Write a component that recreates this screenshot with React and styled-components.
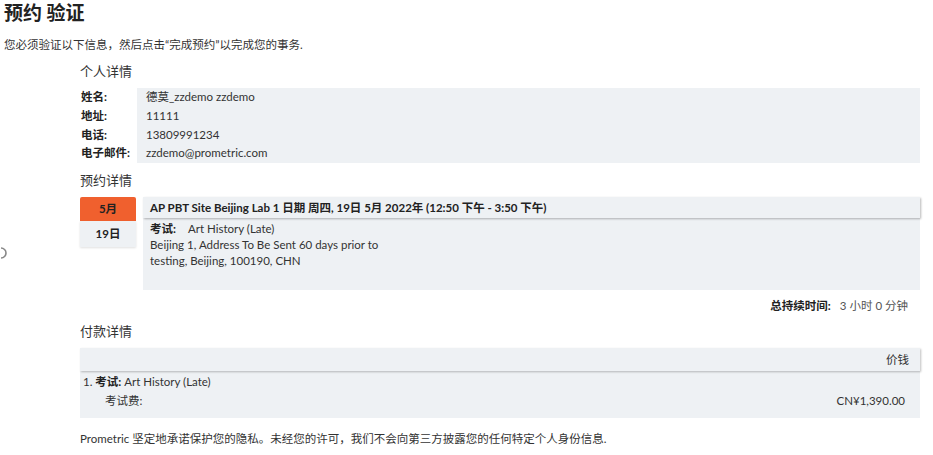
import React from "react";
import styled, { createGlobalStyle } from "styled-components";

const Global = createGlobalStyle`
  html, body { margin: 0; padding: 0; background: #fff; }
  body {
    font-family: Lato, "Noto Sans CJK SC", sans-serif;
    font-size: 11.5px;
    color: #333;
  }
`;

const Page = styled.div`
  position: relative;
  padding: 0 0 0 4px;
  width: 929px;
  height: 455px;
  overflow: hidden;
`;

const Title = styled.h1`
  margin: 0;
  padding-top: 1px;
  font-size: 19px;
  line-height: 24px;
  font-weight: 700;
  color: #222;
`;

const Intro = styled.p`
  margin: 12px 0 0;
  font-size: 11.5px;
  line-height: 16px;
`;

const Content = styled.div`
  margin-left: 76px;
  width: 840px;
`;

const SectionHead = styled.h2`
  margin: ${(p) => p.$top || 9}px 0 0;
  font-size: 13px;
  font-weight: 400;
  line-height: 18px;
  color: #333;
`;

const InfoGrid = styled.div`
  margin-top: 8px;
  display: grid;
  grid-template-columns: 57px 1fr;
  grid-auto-rows: 18.75px;
`;

const InfoLabel = styled.div`
  font-weight: 700;
  line-height: 18.75px;
  padding-left: 1px;
  color: #222;
`;

const InfoValue = styled.div`
  background: #eef1f4;
  line-height: 18.75px;
  padding-left: 9px;
`;

const ApptRow = styled.div`
  margin-top: 8px;
  display: flex;
  gap: 7px;
`;

const Calendar = styled.div`
  width: 56px;
  display: flex;
  flex-direction: column;
  flex-shrink: 0;
  align-self: flex-start;
`;

const Month = styled.div`
  height: 24px;
  line-height: 24px;
  background: #f0602e;
  border-radius: 2px 2px 0 0;
  text-align: center;
  font-weight: 700;
  color: #222;
`;

const Day = styled.div`
  height: 26px;
  line-height: 26px;
  background: #eef1f4;
  text-align: center;
  font-weight: 700;
  color: #222;
  box-shadow: 0 1px 2px rgba(0, 0, 0, 0.12);
`;

const Card = styled.div`
  flex: 1;
  background: #eef1f4;
  height: 93px;
  display: flex;
  flex-direction: column;
`;

const CardHead = styled.div`
  height: 21px;
  line-height: 21px;
  padding-left: 7px;
  font-weight: 700;
  color: #222;
  box-shadow: 1px 1px 2px rgba(0, 0, 0, 0.28);
  position: relative;
`;

const CardBody = styled.div`
  padding: 3px 7px;
  line-height: 15.75px;
`;

const Strong = styled.b`
  font-weight: 700;
  color: #222;
  margin-right: ${(p) => p.$gap || 0}px;
`;

const Duration = styled.div`
  margin-top: 8px;
  text-align: right;
  padding-right: 12px;
  line-height: 16px;
`;

const Muted = styled.span`
  color: #555;
  margin-left: 9px;
`;

const PayTable = styled.div`
  margin-top: 8px;
  background: #eef1f4;
`;

const PayHead = styled.div`
  height: 23px;
  line-height: 23px;
  text-align: right;
  padding-right: 11px;
  box-shadow: 1px 1px 2px rgba(0, 0, 0, 0.25);
`;

const PayBody = styled.div`
  padding: 1px 0 8px;
`;

const PayRow = styled.div`
  display: flex;
  justify-content: space-between;
  line-height: 19px;
  padding-left: ${(p) => p.$indent || 3}px;
  padding-right: 15px;
`;

const Footer = styled.p`
  margin: 13px 0 0;
  line-height: 16px;
`;

const Spinner = styled.svg`
  position: absolute;
  left: 0;
  top: 246px;
`;

export default function App() {
  return (
    <>
      <Global />
      <Page>
        <Spinner width="10" height="14" viewBox="0 0 10 14">
          <path d="M1 2 A5 5 0 0 1 1 12" fill="none" stroke="#888" strokeWidth="1.6" />
        </Spinner>
        <Title>预约 验证</Title>
        <Intro>您必须验证以下信息，然后点击“完成预约”以完成您的事务.</Intro>
        <Content>
          <SectionHead $top={9}>个人详情</SectionHead>
          <InfoGrid>
            <InfoLabel>姓名:</InfoLabel>
            <InfoValue>德莫_zzdemo zzdemo</InfoValue>
            <InfoLabel>地址:</InfoLabel>
            <InfoValue>11111</InfoValue>
            <InfoLabel>电话:</InfoLabel>
            <InfoValue>13809991234</InfoValue>
            <InfoLabel>电子邮件:</InfoLabel>
            <InfoValue>zzdemo@prometric.com</InfoValue>
          </InfoGrid>

          <SectionHead $top={8}>预约详情</SectionHead>
          <ApptRow>
            <Calendar>
              <Month>5月</Month>
              <Day>19日</Day>
            </Calendar>
            <Card>
              <CardHead>
                AP PBT Site Beijing Lab 1 日期 周四, 19日 5月 2022年 (12:50 下午 - 3:50 下午)
              </CardHead>
              <CardBody>
                <div>
                  <Strong $gap={12}>考试:</Strong>Art History (Late)
                </div>
                <div>Beijing 1, Address To Be Sent 60 days prior to</div>
                <div>testing, Beijing, 100190, CHN</div>
              </CardBody>
            </Card>
          </ApptRow>
          <Duration>
            <Strong>总持续时间:</Strong>
            <Muted>3 小时 0 分钟</Muted>
          </Duration>

          <SectionHead $top={8}>付款详情</SectionHead>
          <PayTable>
            <PayHead>价钱</PayHead>
            <PayBody>
              <PayRow>
                <span>
                  1. <Strong>考试:</Strong> Art History (Late)
                </span>
              </PayRow>
              <PayRow $indent={25}>
                <span>考试费:</span>
                <span>CN¥1,390.00</span>
              </PayRow>
            </PayBody>
          </PayTable>
          <Footer>
            Prometric 坚定地承诺保护您的隐私。未经您的许可，我们不会向第三方披露您的任何特定个人身份信息.
          </Footer>
        </Content>
      </Page>
    </>
  );
}
